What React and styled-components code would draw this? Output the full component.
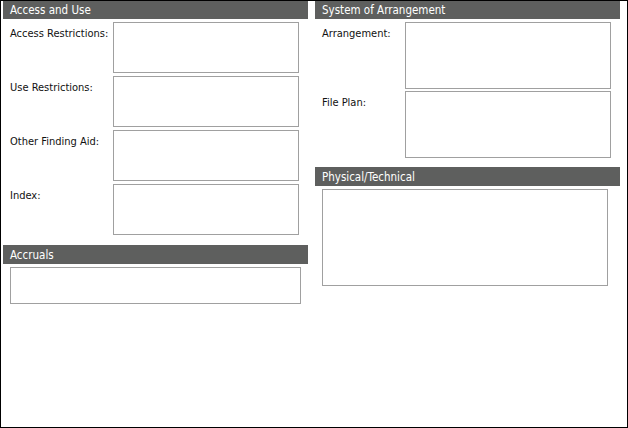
import styled, { createGlobalStyle } from "styled-components"

const GlobalStyle = createGlobalStyle`
    html, body {
        margin: 0;
        padding: 0;
        background: #fff;
    }
    body {
        font-family: "DejaVu Sans Condensed", "Liberation Sans", sans-serif;
        font-size: 11px;
        color: #000;
    }
`

const Frame = styled.div`
    width: 628px;
    height: 428px;
    box-sizing: border-box;
    border: 1px solid #000;
    padding-left: 2px;
    overflow: hidden;
    display: grid;
    grid-template-columns: 305px 305px;
    column-gap: 7px;
    align-items: start;
`

const Column = styled.div`
    margin-top: -1px;
    display: flex;
    flex-direction: column;
`

const SectionHeader = styled.div`
    height: 19px;
    line-height: 20px;
    background: #5e5f5e;
    color: #fff;
    padding-left: 7px;
    font-size: 11.5px;
    margin-top: ${({ gap }) => gap || 0}px;
`

const FieldRow = styled.div`
    display: flex;
    padding-left: 7px;
    margin-top: ${({ gap }) => gap}px;
`

const Label = styled.label`
    width: ${({ w }) => w}px;
    flex: none;
    padding-top: 5px;
    line-height: 13px;
    color: #111;
`

const Box = styled.textarea`
    display: block;
    box-sizing: border-box;
    width: ${({ w }) => w}px;
    height: ${({ h }) => h}px;
    margin: ${({ gap }) => gap || 0}px 0 0 ${({ indent }) => indent || 0}px;
    padding: 2px;
    border: 1px solid #a0a0a0;
    border-radius: 0;
    resize: none;
    outline: none;
    font: inherit;
    background: #fff;
`

const leftFields = ["Access Restrictions:", "Use Restrictions:", "Other Finding Aid:", "Index:"]
const rightFields = ["Arrangement:", "File Plan:"]

export default function App() {
    return (
        <>
            <GlobalStyle />
            <Frame>
                <Column>
                    <SectionHeader>Access and Use</SectionHeader>
                    {leftFields.map((text) => (
                        <FieldRow gap={3} key={text}>
                            <Label w={103}>{text}</Label>
                            <Box w={186} h={51} />
                        </FieldRow>
                    ))}
                    <SectionHeader gap={10}>Accruals</SectionHeader>
                    <Box w={291} h={37} gap={3} indent={7} />
                </Column>
                <Column>
                    <SectionHeader>System of Arrangement</SectionHeader>
                    {rightFields.map((text, i) => (
                        <FieldRow gap={i === 0 ? 3 : 2} key={text}>
                            <Label w={83}>{text}</Label>
                            <Box w={206} h={67} />
                        </FieldRow>
                    ))}
                    <SectionHeader gap={9}>Physical/Technical</SectionHeader>
                    <Box w={286} h={97} gap={3} indent={7} />
                </Column>
            </Frame>
        </>
    )
}
